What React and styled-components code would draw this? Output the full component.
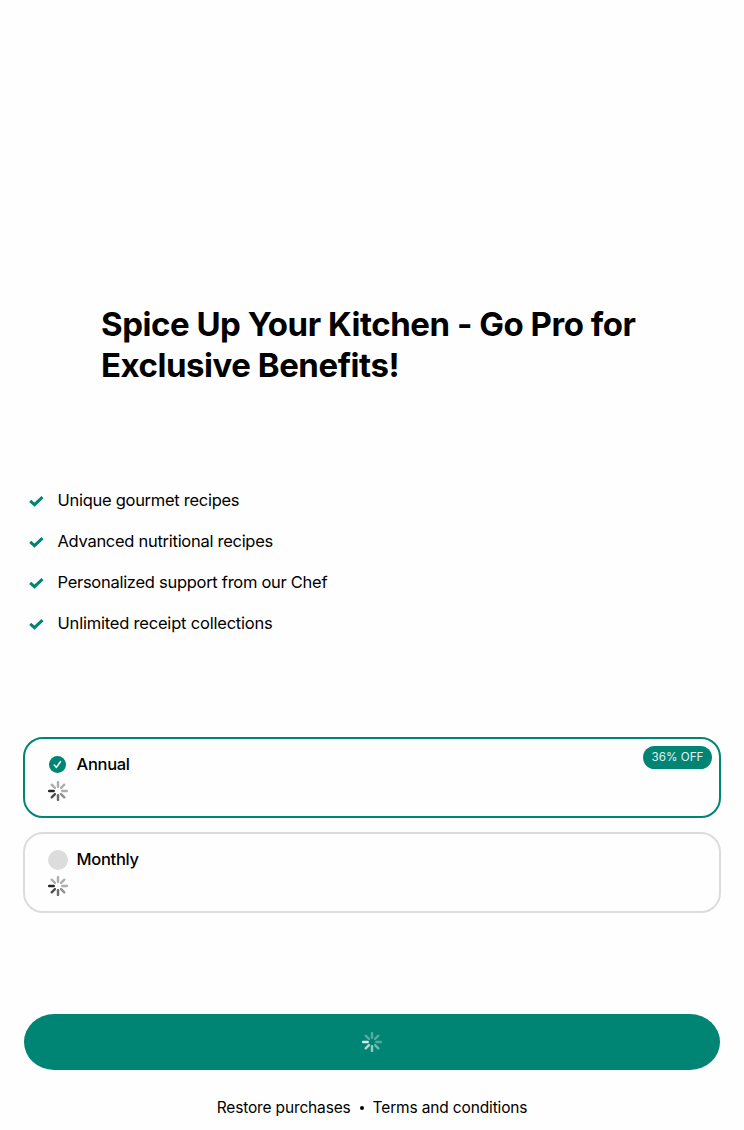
import React from 'react';
import styled, { createGlobalStyle } from 'styled-components';

const GlobalStyle = createGlobalStyle`
  * { box-sizing: border-box; }
  body { margin: 0; background: #fefefe; }
`;

const Screen = styled.main`
  display: flex;
  flex-direction: column;
  width: 744px;
  height: 1130px;
  padding: 304px 24px 0;
  overflow: hidden;
  color: #000;
  font-family: Inter, "Liberation Sans", sans-serif;
`;

const Title = styled.h1`
  margin: 0 0 0 77px;
  width: 560px;
  font-size: 33px;
  line-height: 41px;
  font-weight: 700;
  letter-spacing: -0.47px;
  white-space: nowrap;
`;

const Features = styled.ul`
  display: flex;
  flex-direction: column;
  margin: 93px 0 0;
  padding: 0;
  list-style: none;
`;

const Feature = styled.li`
  display: flex;
  align-items: center;
  height: 41px;
  padding-left: 5px;
  gap: 12.5px;
  font-size: 16.5px;
  letter-spacing: ${(p) => p.$tracking || '-0.28px'};
  white-space: nowrap;
`;

const Plans = styled.div`
  display: flex;
  flex-direction: column;
  gap: 14px;
  margin: 94px -1px 0;
`;

const Plan = styled.section`
  position: relative;
  height: 81px;
  padding: 14px 23px;
  border: 2px solid ${(p) => (p.$selected ? '#008575' : '#dcdcdc')};
  border-radius: 20px;
`;

const PlanHeader = styled.div`
  display: flex;
  align-items: center;
  height: 24px;
  margin-bottom: 4px;
  gap: 8.6px;
  font-size: 16.5px;
  font-weight: 500;
  letter-spacing: -0.32px;
`;

const PlanName = styled.span`
  padding-bottom: 2px;
`;

const Badge = styled.span`
  position: absolute;
  top: 7px;
  right: 7px;
  display: flex;
  align-items: center;
  justify-content: center;
  width: 69px;
  height: 23px;
  padding-bottom: 1px;
  border-radius: 12px;
  background: #008575;
  color: #e3f3f1;
  font-size: 11.7px;
`;

const Icon = styled.svg`
  display: block;
  flex: none;
`;

const PurchaseButton = styled.button`
  display: flex;
  align-items: center;
  justify-content: center;
  flex: none;
  height: 56px;
  margin-top: 101px;
  border: 0;
  border-radius: 30px / 28px;
  background: #008575;
`;

const Footer = styled.footer`
  display: flex;
  align-items: center;
  justify-content: center;
  height: 24px;
  margin-top: 25px;
  gap: 9px;
  font-size: 15.5px;
  letter-spacing: -0.15px;
  white-space: nowrap;
`;

const Dot = styled.span`
  width: 4px;
  height: 4px;
  margin-top: 2px;
  border-radius: 50%;
  background: #000;
`;

const Check = () => (
  <Icon width="16" height="14" viewBox="0 -2 16 14">
    <path d="M1.2 5.8 L5.5 9.6 L13.5 2.1" fill="none" stroke="#008575" strokeWidth="3" />
  </Icon>
);

const Radio = ({ selected }) => (
  <Icon width="20" height="20" viewBox="0 0 20 20">
    <circle cx={selected ? 9.5 : 10} cy={selected ? 9.5 : 10} r={selected ? 8.5 : 10} fill={selected ? '#008575' : '#dcdcdc'} />
    {selected && <path d="M6.3 10 L8.4 12.4 L12.6 6.5" fill="none" stroke="#fff" strokeWidth="1.5" strokeLinecap="round" strokeLinejoin="round" />}
  </Icon>
);

const Spinner = ({ color = '#000', opacities }) => (
  <Icon width="20" height="20" viewBox="-10 -10 20 20">
    {opacities.map((opacity, i) => (
      <line key={i} y1="-4.3" y2="-8.9" stroke={color} strokeOpacity={opacity} strokeWidth="2.4" strokeLinecap="round" transform={`rotate(${i * 45})`} />
    ))}
  </Icon>
);

const spokes = [0.32, 0.32, 0.32, 0.44, 0.58, 0.7, 0.85, 0.32];
const features = [
  { text: 'Unique gourmet recipes' },
  { text: 'Advanced nutritional recipes' },
  { text: 'Personalized support from our Chef' },
  { text: 'Unlimited receipt collections', tracking: '-0.2px' },
];

export default function App() {
  return (
    <Screen>
      <GlobalStyle />
      <Title>Spice Up Your Kitchen - Go Pro for<br />Exclusive Benefits!</Title>
      <Features>
        {features.map(({ text, tracking }) => (
          <Feature key={text} $tracking={tracking}><Check />{text}</Feature>
        ))}
      </Features>
      <Plans>
        <Plan $selected>
          <PlanHeader><Radio selected /><PlanName>Annual</PlanName></PlanHeader>
          <Spinner opacities={spokes} />
          <Badge>36% OFF</Badge>
        </Plan>
        <Plan>
          <PlanHeader><Radio /><PlanName>Monthly</PlanName></PlanHeader>
          <Spinner opacities={spokes} />
        </Plan>
      </Plans>
      <PurchaseButton aria-label="Loading">
        <Spinner color="#fff" opacities={spokes} />
      </PurchaseButton>
      <Footer><span>Restore purchases</span><Dot /><span>Terms and conditions</span></Footer>
    </Screen>
  );
}
